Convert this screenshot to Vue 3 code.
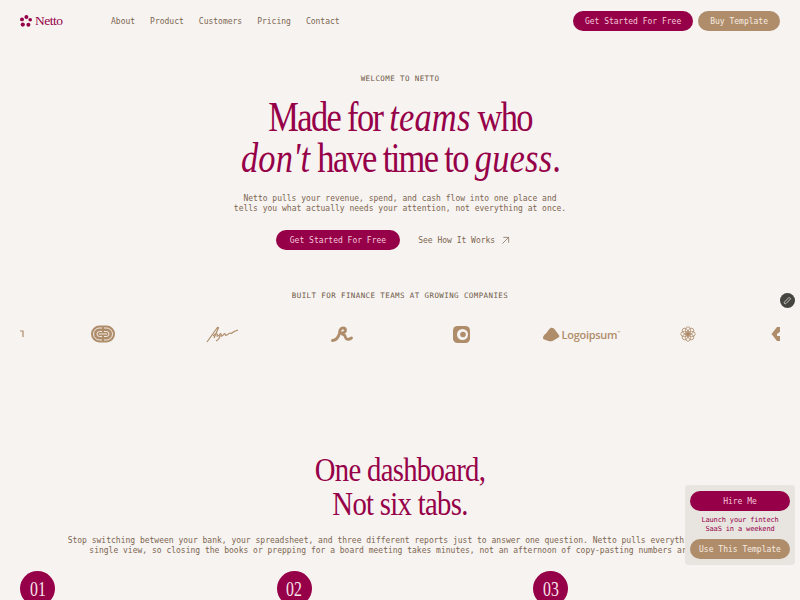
<template>
  <div class="page">
    <header class="nav">
      <div class="nav-left">
        <a class="brand">
          <svg class="flower" viewBox="0 0 12 12" width="12" height="12">
            <ellipse cx="6.4" cy="2" rx="2" ry="2" />
            <ellipse cx="2" cy="4.4" rx="2" ry="1.9" />
            <ellipse cx="10.2" cy="4.8" rx="1.8" ry="1.7" />
            <ellipse cx="2.8" cy="9.6" rx="2.1" ry="2.1" />
            <ellipse cx="8.4" cy="9.8" rx="2" ry="2" />
          </svg>
          <span>Netto</span>
        </a>
        <nav class="links">
          <a v-for="item in links" :key="item">{{ item }}</a>
        </nav>
      </div>
      <div class="nav-right">
        <button class="pill berry">Get Started For Free</button>
        <button class="pill tan">Buy Template</button>
      </div>
    </header>

    <section class="hero">
      <p class="eyebrow">WELCOME TO NETTO</p>
      <h1>Made for <em>teams</em> who<br /><em>don't</em> have time to <em>guess</em>.</h1>
      <p class="lead">Netto pulls your revenue, spend, and cash flow into one place and<br />tells you what actually needs your attention, not everything at once.</p>
      <div class="hero-actions">
        <button class="pill berry big">Get Started For Free</button>
        <a class="ghost">
          See How It Works
          <svg viewBox="0 0 10 10" width="9" height="9" fill="none" stroke="#8a7460" stroke-width="0.9">
            <path d="M1.5 8.5 8.5 1.5M2.5 1.5h6v6" />
          </svg>
        </a>
      </div>
    </section>

    <section class="logos">
      <p class="eyebrow">BUILT FOR FINANCE TEAMS AT GROWING COMPANIES</p>
      <div class="strip">
        <div class="track">
          <div class="slot">
            <svg viewBox="0 0 80 18" width="80" height="18" fill="none" stroke="#b08d6a" stroke-width="1.2">
              <path d="M76 6h3v6" />
            </svg>
          </div>
          <div class="slot">
            <svg viewBox="0 0 24 18" width="24" height="18">
              <rect y="0.5" width="24" height="17" rx="8.5" fill="#b08d6a" />
              <g fill="none" stroke="#f5f3f1" stroke-width="0.9">
                <path d="M11 3H8.5a6 6 0 0 0 0 12H11" />
                <path d="M11 6.5H8.5a2.5 2.5 0 0 0 0 5H11" />
                <path d="M13 3h2.5a6 6 0 0 1 0 12H13" />
                <path d="M13 6.5h2.5a2.5 2.5 0 0 1 0 5H13" />
                <path d="M8 9h8" />
              </g>
            </svg>
          </div>
          <div class="slot">
            <svg viewBox="0 0 34 17" width="34" height="17" fill="none" stroke="#b08d6a" stroke-width="1.2">
              <path d="M1 16C4 12 8 6 11 2c1-1 2-1 1 1L8 12" />
              <path d="M7 10c2-2 3-3 4-2s-1 3 1 2 2-3 3-2-1 3 1 2 2-3 3-2 0 2 2 1 2-2 3-2 1 1 2 0 3-2 6-3" />
              <path d="M14 9c0 3-2 5-4 6" />
            </svg>
          </div>
          <div class="slot">
            <svg viewBox="0 0 22 16" width="22" height="16" fill="none" stroke="#b08d6a" stroke-width="2.8" stroke-linecap="round">
              <path d="M1.5 14.5C5 14 7.5 11 8.5 7.5 8.5 5 9 2 12 2s3.5 3.5.5 4.500c-1.500.5-3 .5-4 1" />
              <path d="M11 8c2 0 3 1.500 3.500 3.500.5 2 3 2.500 6 .5" />
            </svg>
          </div>
          <div class="slot">
            <svg viewBox="0 0 17 17" width="17" height="17">
              <rect width="17" height="17" rx="4.5" fill="#b08d6a" />
              <circle cx="9.5" cy="8.5" r="5.5" fill="#f5f3f1" />
              <circle cx="10" cy="8.5" r="2.8" fill="#b08d6a" />
            </svg>
          </div>
          <div class="slot wordmark">
            <svg viewBox="0 0 17 15" width="17" height="15">
              <path d="M0 11c0-2 1.500-3.500 3-4.500C4.500 5 6 1.500 8 .8c1.500-.5 3 .5 4 2l4 5.500c.8 1.200.2 2-1 2.500l-5 3c-1.500.7-3 .7-4.500.2l-3-1C1 12.500 0 12 0 11Z" fill="#b08d6a" />
            </svg>
            <span>Logoipsum<sup>™</sup></span>
          </div>
          <div class="slot narrow">
            <svg viewBox="0 0 16 16" width="16" height="16" fill="none" stroke="#b08d6a" stroke-width="0.8">
              <ellipse v-for="a in petals" :key="a" cx="8" cy="4.5" rx="2.6" ry="3.8" :transform="`rotate(${a} 8 8)`" />
              <circle cx="8" cy="8" r="1.8" />
            </svg>
          </div>
          <div class="slot last">
            <svg viewBox="0 0 22 16" width="22" height="16">
              <path d="M0.5 8 6 1h8v14H6Z" fill="#b08d6a" />
              <path d="M6 8l4-3v3h2v2H6Z" fill="#f5f3f1" />
            </svg>
          </div>
        </div>
      </div>
    </section>

    <section class="features">
      <h2>One dashboard,<br />Not six tabs.</h2>
      <p class="copy">Stop switching between your bank, your spreadsheet, and three different reports just to answer one question. Netto pulls everything into a<br />single view, so closing the books or prepping for a board meeting takes minutes, not an afternoon of copy-pasting numbers around.</p>
      <div class="steps">
        <div v-for="n in steps" :key="n" class="step">
          <div class="num"><span>{{ n }}</span></div>
        </div>
      </div>
    </section>

    <button class="pen" aria-label="Edit">
      <svg viewBox="0 0 10 10" width="9" height="9" fill="none" stroke="#d8d6d4" stroke-width="1">
        <path d="M6.800 1.500 8.500 3.200 3.400 8.300a1.200 1.200 0 0 1-1.700-1.700Z" />
      </svg>
    </button>

    <aside class="promo">
      <button class="pill berry wide">Hire Me</button>
      <p>Launch your fintech<br />SaaS in a weekend</p>
      <button class="pill tan wide">Use This Template</button>
    </aside>
  </div>
</template>

<script setup>
const links = ['About', 'Product', 'Customers', 'Pricing', 'Contact']
const steps = ['01', '02', '03']
const petals = [0, 45, 90, 135, 180, 225, 270, 315]
</script>

<style>
html,
body {
  margin: 0;
  background: #f6f3f1;
  overflow: hidden;
}
</style>

<style scoped>
.page {
  height: 600px;
  overflow: hidden;
  background: #f6f3f1;
  color: #7d6650;
  font-family: "DejaVu Sans Mono", monospace;
  font-size: 8px;
}

/* NAV */
.nav {
  display: flex;
  justify-content: space-between;
  align-items: center;
  padding: 11px 20px 0;
}

.nav-left {
  display: flex;
  align-items: center;
}

.brand {
  display: flex;
  align-items: center;
  gap: 3px;
  width: 91px;
  color: #960048;
  font-family: "Liberation Serif", serif;
  font-size: 13.5px;
  letter-spacing: -0.5px;
}

.flower {
  fill: #960048;
}

.links {
  display: flex;
  gap: 15px;
}

.nav-right {
  display: flex;
  gap: 5px;
}

/* BUTTONS */
.pill {
  height: 20px;
  padding: 0 12px;
  border: none;
  border-radius: 10px;
  font-family: inherit;
  font-size: 8px;
}

.berry {
  background: #960048;
  color: #f7c9dc;
}

.tan {
  background: #b08d6a;
  color: #f6ece2;
}

.big {
  padding: 0 14px;
}

/* HERO */
.hero {
  display: flex;
  flex-direction: column;
  align-items: center;
  padding-top: 44px;
  text-align: center;
}

.eyebrow {
  margin: 0;
  color: #6f5a46;
  font-size: 7.5px;
  letter-spacing: 0.4px;
  line-height: 8px;
}

h1 {
  margin: 14px 0 0;
  color: #960048;
  font-family: "Liberation Serif", serif;
  font-size: 42px;
  font-weight: 400;
  line-height: 41px;
  letter-spacing: -2px;
  white-space: nowrap;
  transform: scaleX(0.82);
}

h1 em {
  letter-spacing: 0.2px;
}

.lead {
  margin: 15px 0 0;
  line-height: 10px;
}

.hero-actions {
  display: flex;
  align-items: center;
  gap: 18px;
  margin-top: 16px;
}

.ghost {
  display: flex;
  align-items: center;
  gap: 6px;
  padding-right: 14px;
}

/* LOGOS */
.logos {
  padding: 42px 20px 0;
  text-align: center;
}

.strip {
  overflow: hidden;
  margin-top: 25px;
}

.track {
  display: flex;
  align-items: center;
  margin-left: -96px;
  height: 18px;
}

.slot {
  flex: none;
  display: flex;
  align-items: center;
  justify-content: center;
  width: 119.5px;
}

.narrow {
  width: 94.5px;
}

.last {
  width: 93px;
}

.wordmark {
  gap: 2px;
  color: #b08d6a;
  font-family: "Open Sans", sans-serif;
  font-size: 11px;
  font-weight: 600;
  letter-spacing: -0.3px;
}

.wordmark sup {
  font-size: 4px;
}

/* FEATURES */
.features {
  padding: 110px 20px 0;
  text-align: center;
}

h2 {
  margin: 0;
  color: #960048;
  font-family: "Liberation Serif", serif;
  font-size: 33px;
  font-weight: 400;
  line-height: 34px;
  letter-spacing: -0.8px;
  white-space: nowrap;
  transform: scaleX(0.87);
}

.copy {
  margin: 15px -40px 0;
  line-height: 10px;
}

.steps {
  display: grid;
  grid-template-columns: repeat(3, 1fr);
  gap: 10px;
  margin-top: 15px;
}

.num {
  display: flex;
  align-items: center;
  justify-content: center;
  width: 35px;
  height: 35px;
  border-radius: 50%;
  background: #960048;
  color: #f6e4ea;
  font-family: "Liberation Serif", serif;
  font-size: 22px;
}

.num span {
  transform: scaleX(0.72);
}

/* FLOATING */
.pen {
  position: fixed;
  top: 293px;
  right: 5px;
  display: flex;
  align-items: center;
  justify-content: center;
  width: 15px;
  height: 15px;
  padding: 0;
  border: none;
  border-radius: 50%;
  background: #45453f;
}

.promo {
  position: fixed;
  right: 5px;
  bottom: 35px;
  box-sizing: border-box;
  width: 110px;
  padding: 6px 5px;
  border-radius: 4px;
  background: #e8e4e0;
  text-align: center;
}

.promo p {
  margin: 5px 0;
  color: #960048;
  font-size: 7px;
  letter-spacing: -0.15px;
  line-height: 9px;
}

.wide {
  display: block;
  width: 100%;
  padding: 0;
}
</style>
